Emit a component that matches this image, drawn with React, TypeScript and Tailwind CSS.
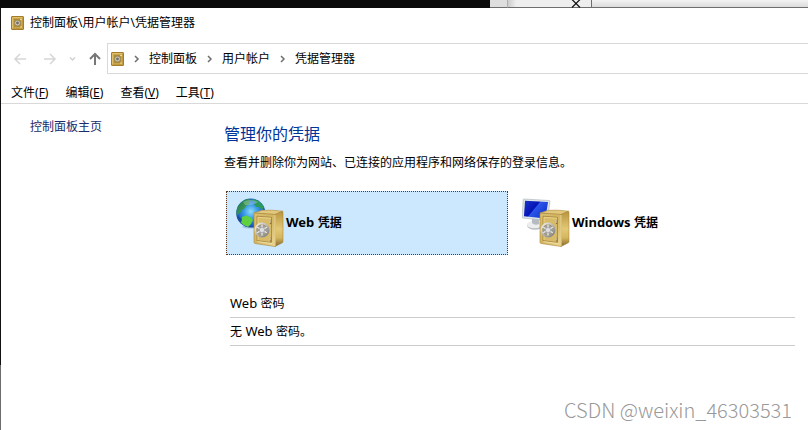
import clsx from 'clsx';
import { ReactNode } from 'react';

const menus = [
  { label: '文件', hotkey: 'F' },
  { label: '编辑', hotkey: 'E' },
  { label: '查看', hotkey: 'V' },
  { label: '工具', hotkey: 'T' },
];

const crumbs = ['控制面板', '用户帐户', '凭据管理器'];

function SmallSafeIcon() {
  return (
    <svg width="13" height="14" viewBox="0 0 13 14" className="shrink-0">
      <rect x="0.5" y="0.5" width="12" height="13" rx="0.5" fill="#c19a3f" stroke="#a37d2c" />
      <path d="M1.5 12.5V1.5h10" fill="none" stroke="#dfc06a" />
      <rect x="2.5" y="2.5" width="8" height="9" fill="#ad8a3c" stroke="#c9a54c" />
      <circle cx="6.5" cy="7" r="2.8" fill="#d3cfc2" stroke="#8d7a4c" strokeWidth="0.6" />
      <circle cx="6.5" cy="7" r="1.4" fill="#6f6d68" />
      <circle cx="10" cy="3.5" r="0.8" fill="#fff3c4" />
      <circle cx="10" cy="11" r="0.8" fill="#f5e2a0" />
    </svg>
  );
}

function Safe({ id }: { id: string }) {
  return (
    <g>
      <defs>
        <linearGradient id={`${id}-front`} x1="0" y1="0" x2="1" y2="1">
          <stop offset="0" stopColor="#d9bf70" />
          <stop offset="0.5" stopColor="#d3b560" />
          <stop offset="1" stopColor="#ecd692" />
        </linearGradient>
        <linearGradient id={`${id}-side`} x1="0" y1="0" x2="0" y2="1">
          <stop offset="0" stopColor="#b8943d" />
          <stop offset="0.5" stopColor="#e3c876" />
          <stop offset="0.75" stopColor="#d5b65f" />
          <stop offset="1" stopColor="#86662a" />
        </linearGradient>
        <linearGradient id={`${id}-dial`} x1="0" y1="0" x2="1" y2="1">
          <stop offset="0" stopColor="#f4f4f4" />
          <stop offset="0.5" stopColor="#b5b6b8" />
          <stop offset="1" stopColor="#77777a" />
        </linearGradient>
      </defs>
      <path d="M18 15L26 12.3Q36 11.6 46.5 13.2L39 16.5Z" fill="#e2c87e" stroke="#b39142" strokeWidth="0.6" />
      <path d="M39 16.5L46.5 13.2Q47 13.4 47 15V43.5Q47 44.5 46 45L39 48.5Z" fill={`url(#${id}-side)`} stroke="#a17d33" strokeWidth="0.5" />
      <path d="M18.6 15L39 16.5V48.5L19 45.5Q18 45.3 18 44.3V16Z" fill={`url(#${id}-front)`} stroke="#a98638" strokeWidth="0.6" />
      <path d="M39 17V48" stroke="#f6e6ae" strokeWidth="0.9" />
      <path d="M21 18.2L35.5 19.3V44.5L21 42.6Z" fill="#d8bb68" stroke="#a38238" strokeWidth="0.8" />
      <path d="M22 42V19.3L35 20.3" fill="none" stroke="#efdc9c" strokeWidth="0.7" />
      <path d="M21.5 43.6L36 45.5" stroke="#f7eabb" strokeWidth="0.7" />
      <circle cx="26" cy="32" r="6.6" fill="#c9b06a" stroke={`url(#${id}-dial)`} strokeWidth="1.7" />
      <circle cx="26" cy="32" r="5.2" fill="#a3a09a" stroke="#85806f" strokeWidth="0.5" />
      <path
        d="M26 26.5V37.5M21.2 29.2L30.8 34.8M21.2 34.8L30.8 29.2"
        stroke="#ebebec"
        strokeWidth="1.3"
      />
      <circle cx="26" cy="32" r="2.7" fill="#dcdddf" stroke="#8b8b8c" strokeWidth="0.5" />
      <path d="M34.6 22V26M34.6 39.5V43.5" stroke="#8a6e31" strokeWidth="1.4" />
      <path d="M34.2 22V25M34.2 39.5V42.5" stroke="#fff5cb" strokeWidth="0.7" />
    </g>
  );
}

function WebIcon() {
  return (
    <svg width="48" height="50" viewBox="0 0 48 50" className="shrink-0">
      <defs>
        <radialGradient id="globe" cx="0.5" cy="0.45" r="0.58">
          <stop offset="0" stopColor="#8fdcf8" />
          <stop offset="0.4" stopColor="#3d9ce6" />
          <stop offset="0.8" stopColor="#1c5cc2" />
          <stop offset="1" stopColor="#12408f" />
        </radialGradient>
        <linearGradient id="land" x1="0" y1="0" x2="1" y2="1">
          <stop offset="0" stopColor="#1e6e58" />
          <stop offset="1" stopColor="#4fbd4c" />
        </linearGradient>
      </defs>
      <ellipse cx="16" cy="29" rx="10" ry="1.6" fill="#a3c5e0" />
      <circle cx="14.8" cy="15" r="14.6" fill="url(#globe)" />
      <path
        d="M2 8Q6 2 12 1L15 2L13 4L14 6L10 8L8 11L6 12L4 15L2 16L0.6 18Q0 12 2 8Z"
        fill="url(#land)"
      />
      <path d="M17 1Q24 2 28 9L26 12L23 9L20 9L18 6L20 4L16 3Z" fill="#2c9a5c" />
      <path d="M6 19L10 17.5L14 19L17 22L15 26L12 29Q8 28 4.5 24.5Z" fill="#5fd03f" />
      <path d="M2 18L6 21L5 25Q2 22 1 19Z" fill="#1a4e9f" />
      <path d="M25 13L29 14L29 18L26 18Z" fill="#3ba75a" />
      <path d="M7 4Q14 0 22 4Q16 8 9 7Z" fill="#ffffff" opacity="0.25" />
      <Safe id="web" />
    </svg>
  );
}

function WindowsIcon() {
  return (
    <svg width="48" height="50" viewBox="0 0 48 50" className="shrink-0">
      <defs>
        <linearGradient id="screen" x1="0" y1="0" x2="1" y2="0.6">
          <stop offset="0" stopColor="#1c35c4" />
          <stop offset="0.5" stopColor="#0513b8" />
          <stop offset="0.54" stopColor="#2c56e8" />
          <stop offset="1" stopColor="#1236d2" />
        </linearGradient>
      </defs>
      <ellipse cx="13" cy="27.5" rx="8" ry="4.2" fill="#b9bec2" />
      <ellipse cx="12.5" cy="26.7" rx="7.5" ry="3.6" fill="#eceeef" />
      <path d="M10 20L17 21V26Q13 28 10 25Z" fill="#b5bbc0" />
      <path d="M2 1L27 2.5Q28 2.5 28 3.5L25 22.5L1 20Q0 20 0.2 19L1.2 1.6Q1.3 1 2 1Z" fill="#dfe5e8" stroke="#b0babf" strokeWidth="0.7" />
      <path d="M3 2.7L26 4.1L23.5 20.4L2 18.2Z" fill="url(#screen)" />
      <Safe id="windows" />
    </svg>
  );
}

function NavArrow({ direction }: { direction: 'left' | 'right' | 'up' }) {
  return (
    <svg
      width="14"
      height="14"
      viewBox="0 0 14 14"
      fill="none"
      stroke={direction === 'up' ? '#777777' : '#d6d6d6'}
      strokeWidth={direction === 'up' ? 2 : 1.5}
    >
      {direction === 'left' && <path d="M13 7H2M7 2L2 7L7 12" />}
      {direction === 'right' && <path d="M1 7H12M7 2L12 7L7 12" />}
      {direction === 'up' && <path d="M7 13V2M2 7L7 2L12 7" />}
    </svg>
  );
}

type CredentialTileProps = {
  selected?: boolean;
  icon: ReactNode;
  kind: string;
};

function CredentialTile({ selected, icon, kind }: CredentialTileProps) {
  return (
    <button
      type="button"
      aria-pressed={!!selected}
      className={clsx(
        'flex h-16 w-[282px] items-center gap-[2px] border border-dotted pl-[9px] text-left font-bold',
        selected ? 'border-[#6b3413] bg-[#cce8ff]' : 'border-transparent',
      )}
    >
      {icon}
      <span>
        <span className="text-[13px]">{kind} </span>凭据
      </span>
    </button>
  );
}

function DesktopStrip() {
  return (
    <div className="flex h-2 shrink-0">
      <div className="w-[490px] bg-[#0a0a0a]" />
      <div className="w-[17px] border-b border-[#6e6e6e] bg-[#dedede]" />
      <div className="flex w-[84px] justify-center border-b border-l border-[#6e6e6e] border-l-[#b0b0b0] bg-gradient-to-r from-[#cccccc] via-[#eeeeee] via-10% to-[#eeeeee] pl-[52px]">
        <svg width="10" height="8" viewBox="0 0 10 8" className="shrink-0">
          <path d="M1 -0.5L9 7.5M9 -0.5L1 7.5" stroke="#111111" strokeWidth="1.2" />
        </svg>
      </div>
      <div className="flex-1 border-b border-l border-[#6e6e6e] bg-gradient-to-b from-[#f3f3f3] to-[#dcdcdc]" />
    </div>
  );
}

export default function App() {
  return (
    <div className="relative flex min-h-screen flex-col bg-white font-['Noto_Sans','Noto_Sans_CJK_SC',sans-serif] text-xs text-black">
      <DesktopStrip />
      <div className="flex flex-1">
        <div className="flex w-px shrink-0 flex-col bg-[#6c6c6c]">
          <div className="h-[357px] bg-[#111111]" />
        </div>

        <div className="min-w-0 flex-1">
          <header>
            <div className="flex h-[29px] items-center gap-[6px] pl-[10px]">
              <SmallSafeIcon />
              <h1>控制面板\用户帐户\凭据管理器</h1>
            </div>

            <div className="mt-[6px] flex h-[31px] items-center">
              <div className="flex w-[106px] items-center pl-3">
                <button type="button" aria-label="后退" className="mr-4">
                  <NavArrow direction="left" />
                </button>
                <button type="button" aria-label="前进" className="mr-3">
                  <NavArrow direction="right" />
                </button>
                <button type="button" aria-label="最近浏览的位置" className="mr-3">
                  <svg width="7" height="6" viewBox="0 0 7 6" fill="none" stroke="#d0d0d0" strokeWidth="1.3">
                    <path d="M1 1.5L3.5 4L6 1.5" />
                  </svg>
                </button>
                <button type="button" aria-label="上移">
                  <NavArrow direction="up" />
                </button>
              </div>
              <nav className="flex h-full flex-1 items-center border border-r-0 border-[#d9d9d9] pl-[3px]">
                <SmallSafeIcon />
                {crumbs.map((crumb) => (
                  <div key={crumb} className="flex items-center">
                    <svg width="25" height="8" viewBox="0 0 25 8" fill="none" stroke="#6f6f6f" strokeWidth="1.5">
                      <path d="M11 1L14 4L11 7" />
                    </svg>
                    <button type="button">{crumb}</button>
                  </div>
                ))}
              </nav>
            </div>

            <div className="flex h-[30px] items-center gap-[17px] border-b border-[#d9d9d9] pt-[9px] pl-[10px]">
              {menus.map((menu) => (
                <button type="button" key={menu.hotkey}>
                  {menu.label}(<u>{menu.hotkey}</u>)
                </button>
              ))}
            </div>
          </header>

          <div className="flex">
            <aside className="w-[223px] shrink-0 pt-[15px] pl-[29px]">
              <a href="#home" className="text-[#1a2c6b]">
                控制面板主页
              </a>
            </aside>

            <main className="min-w-0 flex-1 pt-[18px] pr-[13px]">
              <h2 className="text-base leading-6 text-[#003399]">管理你的凭据</h2>
              <p className="mt-2 leading-[18px]">
                查看并删除你为网站、已连接的应用程序和网络保存的登录信息。
              </p>

              <div className="mt-[19px] flex gap-1 pl-[2px]">
                <CredentialTile selected icon={<WebIcon />} kind="Web" />
                <CredentialTile icon={<WindowsIcon />} kind="Windows" />
              </div>

              <section className="mt-[35px] ml-[6px]">
                <h3 className="flex h-7 items-center border-b border-[#cccccc]">
                  <span>
                    <span className="text-[13px]">Web </span>密码
                  </span>
                </h3>
                <p className="flex h-7 items-center border-b border-[#cccccc]">
                  <span>
                    无<span className="text-[13px]"> Web </span>密码。
                  </span>
                </p>
              </section>
            </main>
          </div>
        </div>
      </div>

      <div className="absolute right-4 bottom-1 font-['Noto_Sans_CJK_SC',sans-serif] text-xl leading-8 font-light text-[#999999]">
        CSDN @weixin_46303531
      </div>
    </div>
  );
}
